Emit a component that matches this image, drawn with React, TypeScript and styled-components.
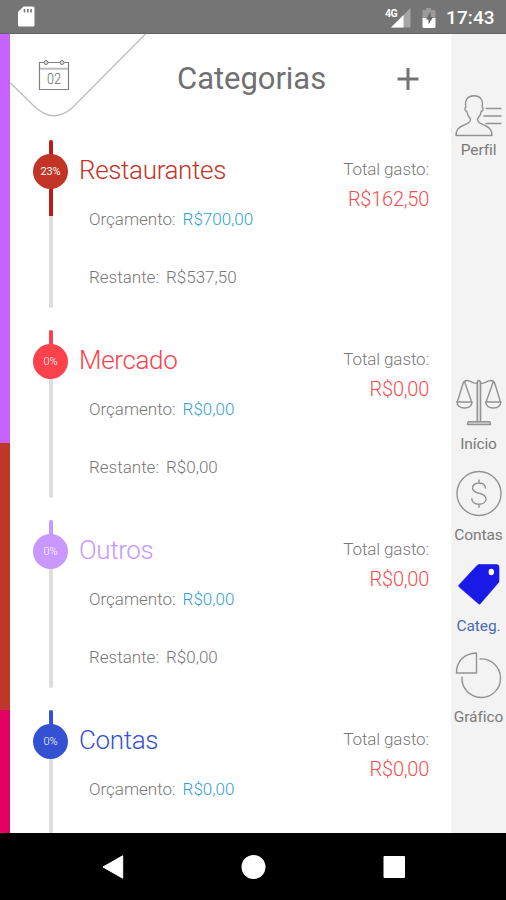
import React from 'react';
import styled, { createGlobalStyle } from 'styled-components';

const GlobalStyle = createGlobalStyle`
  * { box-sizing: border-box; }
  body { margin: 0; background: #fff; font-family: Roboto, "Open Sans", sans-serif; }
  svg { display: block; }
`;

const Screen = styled.div`
  display: flex;
  flex-direction: column;
  width: 506px;
  height: 900px;
  overflow: hidden;
`;

const StatusBar = styled.header`
  display: flex;
  align-items: center;
  height: 34px;
  flex: none;
  padding: 0 10px 0 17px;
  background: #757575;
  border-bottom: 1px solid #636363;
  color: #fff;
`;

const StatusIcons = styled.div`
  display: flex;
  align-items: center;
  margin-left: auto;
`;

const Clock = styled.span`
  width: 50px;
  margin: 2px 0 0 9px;
  font-size: 19px;
  font-weight: 500;
  line-height: 34px;
  letter-spacing: 0.1px;
  white-space: nowrap;
`;

const Body = styled.div`
  display: grid;
  grid-template-columns: 10px 441px 55px;
  height: 799px;
  flex: none;
`;

const Stripe = styled.div`
  display: flex;
  flex-direction: column;
`;

const StripePart = styled.div<{ $color: string; $height: number }>`
  height: ${(p) => p.$height}px;
  background: ${(p) => p.$color};
`;

const Main = styled.main`
  height: 799px;
  overflow: hidden;
  background: #fff;
`;

const TitleBar = styled.div`
  position: relative;
  display: flex;
  align-items: center;
  height: 88px;
  margin-bottom: 18px;
`;

const DateCorner = styled.svg`
  position: absolute;
  left: 0;
  top: 0;
`;

const DateText = styled.text`
  font-size: 14px;
  font-weight: 300;
  fill: #666;
`;

const Title = styled.h1`
  width: 151px;
  margin: 1px 0 0 167px;
  font-size: 31px;
  line-height: 88px;
  font-weight: 400;
  letter-spacing: -0.05px;
  color: #707070;
  white-space: nowrap;
`;

const AddButton = styled.button`
  margin: 1px 0 0 69px;
  padding: 0;
  border: 0;
  background: none;
`;

const Category = styled.section`
  display: grid;
  grid-template-columns: 35px 1fr 120px;
  height: 190px;
  padding: 0 22px 0 23px;
`;

const Track = styled.div`
  position: relative;
  width: 4px;
  height: 168px;
  margin-left: 16px;
  border-radius: 2px;
  background: #dedede;
`;

const TrackFill = styled.div<{ $color: string; $height: number }>`
  height: ${(p) => p.$height}px;
  border-radius: 2px 2px 0 0;
  background: ${(p) => p.$color};
`;

const Badge = styled.span<{ $color: string; $wide: boolean }>`
  position: absolute;
  left: -16px;
  top: 14px;
  width: 35px;
  height: 35px;
  border-radius: 50%;
  background: ${(p) => p.$color};
  color: #fff;
  font-size: 11px;
  font-weight: ${(p) => (p.$wide ? 400 : 300)};
  line-height: 36px;
  letter-spacing: -0.2px;
  text-align: center;
`;

const Details = styled.div`
  padding-left: 11px;
`;

const Name = styled.h2<{ $color: string }>`
  margin: 0;
  padding: 11px 0 1px;
  font-size: 26px;
  line-height: 38px;
  font-weight: 300;
  letter-spacing: -0.35px;
  color: ${(p) => p.$color};
  white-space: nowrap;
`;

const Line = styled.div`
  display: flex;
  gap: 7px;
  height: 58px;
  padding-left: 10px;
  font-size: 17px;
  line-height: 58px;
  font-weight: 300;
  color: #777;
  white-space: nowrap;
`;

const Budget = styled.span`
  color: #309fd8;
`;

const Spent = styled.div`
  padding-top: 14px;
  text-align: right;
  font-size: 17px;
  line-height: 30px;
  font-weight: 300;
  letter-spacing: -0.1px;
  color: #777;
  white-space: nowrap;
`;

const SpentValue = styled.div`
  font-size: 20px;
  line-height: 30px;
  letter-spacing: -0.25px;
  color: #f94c4c;
`;

const Sidebar = styled.nav`
  display: flex;
  flex-direction: column;
  padding-top: 50px;
  background: #f3f3f3;
`;

const NavItem = styled.a<{ $active?: boolean; $first?: boolean }>`
  display: flex;
  flex-direction: column;
  align-items: center;
  height: 91px;
  flex: none;
  margin-bottom: ${(p) => (p.$first ? 203 : 0)}px;
  color: ${(p) => (p.$active ? '#4a6ab5' : '#7a7a7a')};
`;

const NavGraphic = styled.svg`
  overflow: visible;
`;

const NavLabel = styled.span`
  font-size: 15.5px;
  line-height: 20px;
  margin-top: 8px;
  letter-spacing: -0.1px;
  white-space: nowrap;
`;

const AndroidNav = styled.footer`
  height: 67px;
  flex: none;
  display: flex;
  align-items: center;
  gap: 117px;
  padding-left: 102px;
  background: #000;
`;

const categories = [
  { name: 'Restaurantes', color: '#c23426', bar: '#b91c1c', percent: 23, fill: 76, spent: 'R$162,50', budget: 'R$700,00', left: 'R$537,50' },
  { name: 'Mercado', color: '#fb414c', bar: '#fb414c', percent: 0, fill: 20, spent: 'R$0,00', budget: 'R$0,00', left: 'R$0,00' },
  { name: 'Outros', color: '#c898ff', bar: '#c898ff', percent: 0, fill: 20, spent: 'R$0,00', budget: 'R$0,00', left: 'R$0,00' },
  { name: 'Contas', color: '#3451d4', bar: '#3451d4', percent: 0, fill: 20, spent: 'R$0,00', budget: 'R$0,00' },
];

const NavIcon = ({ children }: { children: React.ReactNode }) => (
  <NavGraphic width="55" height="48" viewBox="0 0 55 48" fill="none" stroke="#929292" strokeWidth="1.4" strokeLinejoin="round" strokeLinecap="round">
    {children}
  </NavGraphic>
);

const ProfileIcon = () => (
  <NavIcon>
    <path d="M5 51.500C5 46 7 44 12 41.500c4.500-2 7.500-2.500 7.500-6.500-2-2-3.200-4.500-3.700-7.500-2-.8-2.300-3.500-1-4.500C13.500 15.500 17 11.800 23 11.800S32.500 15.500 31.200 23c1.300 1 1 3.700-1 4.500-.5 3-1.700 5.500-3.700 7.500 0 4 3 4.500 7.500 6.500 5 2.500 7 4.500 7 10z" />
    <path d="M34.500 24.500h16M32.500 32h18M34.500 39.500h16" strokeLinecap="butt" />
  </NavIcon>
);

const ScalesIcon = () => (
  <NavIcon>
    <path d="M26.200 43V5.500q0-3 1.700-3t1.700 3V43" fill="#d9d9d9" />
    <path d="M17.800 43.700h20.400q1.300 0 1.300 2.800h-23q0-2.800 1.300-2.800z" fill="#d9d9d9" />
    <path d="M26.200 5.200c-5 1-6-2.700-10.200-2.700-2 0-3.300 1-4 3L6.500 23.500M13.800 4.500l6.700 19M29.600 5.200c5 1 6-2.700 10.200-2.700 2 0 3.300 1 4 3l5.500 18M42 4.500l-6.700 19" />
    <path d="M5.800 24h15.400c-.5 4-3 6-7.700 6s-7.200-2-7.700-6zM34.600 24H50c-.5 4-3 6-7.700 6s-7.200-2-7.700-6z" />
  </NavIcon>
);

const DollarIcon = () => (
  <NavIcon>
    <circle cx="28" cy="24.500" r="22" />
    <path d="M34.500 19c-.3-3-3-5-6.500-5s-6.500 2-6.500 5 2.500 4.300 6.500 5.200c4.500 1 7 2.500 7 5.700s-3 5.300-7 5.300-7-2-7.200-5.400M28 11v3M28 35.200v3" />
  </NavIcon>
);

const TagIcon = () => (
  <NavIcon>
    <path d="M28.500 4.500h17q2.500 0 2.500 2.500v15L29.500 43.500q-1 1.200-2.200.1L8.200 27q-1.200-1.200 0-2.300L26 5.500q1-1 2.500-1z" fill="#1a1ae6" stroke="#1a1ae6" strokeWidth=".6" />
    <ellipse cx="40.300" cy="12" rx="2.700" ry="3.300" fill="#fff" stroke="none" />
  </NavIcon>
);

const ChartIcon = () => (
  <NavIcon>
    <path d="M25.500 2v20H5.500C5.500 10 13 2.500 25.500 2z" />
    <path d="M28.500 8a19.300 19.300 0 1 1-17.500 17.500" strokeLinecap="butt" />
  </NavIcon>
);

const navItems = [
  { label: 'Perfil', Icon: ProfileIcon },
  { label: 'Início', Icon: ScalesIcon },
  { label: 'Contas', Icon: DollarIcon },
  { label: 'Categ.', Icon: TagIcon },
  { label: 'Gráfico', Icon: ChartIcon },
];

export default function App() {
  return (
    <Screen>
      <GlobalStyle />
      <StatusBar>
        <svg width="18" height="21" viewBox="0 0 18 21">
          <path d="M6.500.5H16q1.500 0 1.500 1.500v17q0 1.500-1.500 1.500H2.500Q1 20.500 1 19V6z" fill="#fff" />
          <path d="M7.500 3v3.500M10.800 3v3.500M14 3v3.500" stroke="#757575" strokeWidth="1.600" />
        </svg>
        <StatusIcons>
          <svg width="52" height="24" viewBox="0 0 52 24">
            <path d="M25.500 3v19.500H6z" fill="#a6a6a6" />
            <path d="M18.500 10v12.500H6z" fill="#fff" />
            <text x="0" y="11.500" fontSize="10.500" fontWeight="700" fill="#fff" stroke="#757575" strokeWidth="1.500" paintOrder="stroke" letterSpacing="-.6">4G</text>
            <path d="M38 5h3V3h5v2h3q1.500 0 1.500 1.500v7H37.500v-7Q37.500 5 38 5z" fill="#9b9b9b" />
            <path d="M37.500 13h13v8.500q0 1.500-1.500 1.500H39q-1.500 0-1.500-1.500z" fill="#fff" />
            <path d="M45.500 6.500 41 14.500h2.500v5l4.500-7.500h-2.500z" fill="#666" />
          </svg>
          <Clock>17:43</Clock>
        </StatusIcons>
      </StatusBar>
      <Body>
        <Stripe>
          <StripePart $color="#c961ff" $height={409} />
          <StripePart $color="#c03729" $height={267} />
          <StripePart $color="#e20062" $height={123} />
        </Stripe>
        <Main>
          <TitleBar>
            <DateCorner width="140" height="90" viewBox="0 0 140 90" fill="none">
              <path d="M0 48.500 25 73Q43.500 90 62 74L135.500 0" stroke="#bdbdbd" strokeWidth="1.300" />
              <path d="M29.500 28.500h29v27h-29z" stroke="#808080" strokeWidth="1.200" />
              <path d="M30 34.700h28" stroke="#bbb" strokeWidth="2" />
              <circle cx="36" cy="28.500" r="2" fill="#ddd" stroke="#777" />
              <circle cx="52" cy="28.500" r="2" fill="#ddd" stroke="#777" />
              <DateText x="37" y="50.300" textLength="14" lengthAdjust="spacingAndGlyphs">02</DateText>
            </DateCorner>
            <Title>Categorias</Title>
            <AddButton aria-label="+">
              <svg width="22" height="22" viewBox="0 0 22 22"><path d="M11 0v22M.500 11h21" stroke="#747474" strokeWidth="3" /></svg>
            </AddButton>
          </TitleBar>
          {categories.map((c) => (
            <Category key={c.name}>
              <Track>
                <TrackFill $color={c.bar} $height={c.fill} />
                <Badge $color={c.color} $wide={c.percent > 0}>{c.percent}%</Badge>
              </Track>
              <Details>
                <Name $color={c.color}>{c.name}</Name>
                <Line>Orçamento: <Budget>{c.budget}</Budget></Line>
                {c.left && <Line>Restante: <span>{c.left}</span></Line>}
              </Details>
              <Spent>
                Total gasto:
                <SpentValue>{c.spent}</SpentValue>
              </Spent>
            </Category>
          ))}
        </Main>
        <Sidebar>
          {navItems.map(({ label, Icon }, i) => (
            <NavItem key={label} $first={i === 0} $active={label === 'Categ.'}>
              <Icon />
              <NavLabel>{label}</NavLabel>
            </NavItem>
          ))}
        </Sidebar>
      </Body>
      <AndroidNav>
        <svg width="22" height="24" viewBox="0 0 22 24"><path d="M20.700.8v22.400L1 12z" fill="#fff" stroke="#fff" strokeLinejoin="round" /></svg>
        <svg width="25" height="24" viewBox="0 0 25 24"><circle cx="12.500" cy="12" r="12" fill="#fff" /></svg>
        <svg width="22" height="22" viewBox="0 0 22 22"><rect x=".5" width="21.500" height="22" rx="1" fill="#fff" /></svg>
      </AndroidNav>
    </Screen>
  );
}
